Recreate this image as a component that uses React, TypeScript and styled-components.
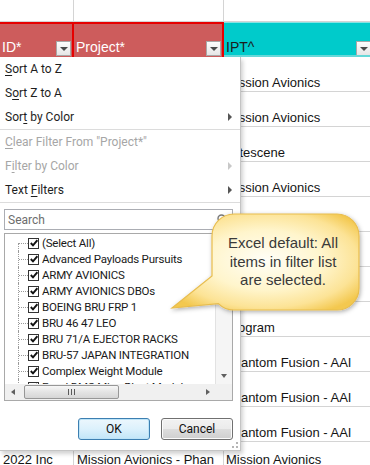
import React from "react"
import styled, { createGlobalStyle, css } from "styled-components"

const GlobalStyle = createGlobalStyle`
  html, body {
    margin: 0;
    padding: 0;
    background: #ffffff;
  }
  body {
    overflow: hidden;
  }
`

// IPT column values; the rows under the callout are left blank
const iptValues = [
  "Mission Avionics",
  "Mission Avionics",
  "Elitescene",
  "Mission Avionics",
  "",
  "",
  "",
  "Program",
  "Phantom Fusion - AAI",
  "Phantom Fusion - AAI",
  "Phantom Fusion - AAI",
]

const projects = [
  "(Select All)",
  "Advanced Payloads Pursuits",
  "ARMY AVIONICS",
  "ARMY AVIONICS DBOs",
  "BOEING BRU FRP 1",
  "BRU 46 47 LEO",
  "BRU 71/A EJECTOR RACKS",
  "BRU-57 JAPAN INTEGRATION",
  "Complex Weight Module",
  "Excel DMS Mine Blast Module",
]

const App: React.FC = () => {
  return (
    <>
      <GlobalStyle />
      <Sheet>
        <Row $h={22}>
          <Cell />
          <Cell />
          <Cell />
        </Row>
        <Row $h={35}>
          <HeaderCell $tone="red">
            <HeaderLabel>ID*</HeaderLabel>
            <FilterButton />
          </HeaderCell>
          <HeaderCell $tone="red">
            <HeaderLabel>Project*</HeaderLabel>
            <FilterButton />
          </HeaderCell>
          <HeaderCell $tone="cyan">
            <HeaderLabel>IPT^</HeaderLabel>
            <FilterButton />
          </HeaderCell>
        </Row>
        {iptValues.map((value, i) => (
          <Row key={i} $h={35}>
            <Cell />
            <Cell />
            <Cell $indent={1}>{value}</Cell>
          </Row>
        ))}
        <Row $h={27}>
          <Cell>2022 Inc</Cell>
          <Cell>Mission Avionics - Phan</Cell>
          <Cell $indent={2}>Mission Avionics</Cell>
        </Row>

        <Menu>
          <MenuItem>
            <span><Key>S</Key>ort A to Z</span>
          </MenuItem>
          <MenuItem>
            <span>S<Key>o</Key>rt Z to A</span>
          </MenuItem>
          <MenuItem>
            <span>Sor<Key>t</Key> by Color</span>
            <SubArrow />
          </MenuItem>
          <Separator />
          <MenuItem $disabled>
            <span><Key>C</Key>lear Filter From "Project*"</span>
          </MenuItem>
          <MenuItem $disabled>
            <span>F<Key>i</Key>lter by Color</span>
            <SubArrow $disabled />
          </MenuItem>
          <MenuItem>
            <span>Text <Key>F</Key>ilters</span>
            <SubArrow />
          </MenuItem>
          <Separator />

          <SearchBox>
            <Placeholder>Search</Placeholder>
            <svg width="11" height="11" viewBox="0 0 11 11">
              <circle cx="4.5" cy="4.5" r="3.5" fill="none" stroke="#7a7a7a" strokeWidth="1.4" />
              <line x1="7.2" y1="7.2" x2="10.2" y2="10.2" stroke="#7a7a7a" strokeWidth="1.6" />
            </svg>
          </SearchBox>

          <ListBox>
            <ListItems>
              {projects.map((name, i) => (
                <TreeItem key={name}>
                  <Connector $first={i === 0} />
                  <CheckBox>
                    <svg width="8" height="8" viewBox="0 0 8 8">
                      <polyline points="0.8,4 3,6.4 7.4,1.2" fill="none" stroke="#111" strokeWidth="1.9" />
                    </svg>
                  </CheckBox>
                  <ItemLabel>{name}</ItemLabel>
                </TreeItem>
              ))}
            </ListItems>
            <VScroll>
              <ArrowBox><Arrow $dir="up" /></ArrowBox>
              <ArrowBox><Arrow $dir="down" /></ArrowBox>
            </VScroll>
            <HScroll>
              <ArrowBox><Arrow $dir="left" /></ArrowBox>
              <Thumb>
                <ThumbGrip />
              </Thumb>
              <TrackRest />
              <ArrowBox><Arrow $dir="right" /></ArrowBox>
            </HScroll>
            <ScrollCorner />
          </ListBox>

          <ButtonRow>
            <DialogButton $primary>OK</DialogButton>
            <DialogButton>Cancel</DialogButton>
          </ButtonRow>
          <GripRow>
            <svg width="6" height="6" viewBox="0 0 6 6">
              <rect x="4" y="0" width="2" height="2" fill="#b5b5b5" />
              <rect x="0" y="4" width="2" height="2" fill="#b5b5b5" />
              <rect x="4" y="4" width="2" height="2" fill="#b5b5b5" />
            </svg>
          </GripRow>
        </Menu>

        <Callout>
          <svg width="210" height="125" viewBox="0 0 210 125">
            <defs>
              <radialGradient id="calloutFill" cx="50%" cy="48%" r="62%">
                <stop offset="0" stopColor="#fffef7" />
                <stop offset="0.5" stopColor="#fff5cc" />
                <stop offset="0.8" stopColor="#fce396" />
                <stop offset="1" stopColor="#f3c84f" />
              </radialGradient>
              <filter id="calloutShadow" x="-10%" y="-10%" width="125%" height="130%">
                <feDropShadow dx="1" dy="1.5" stdDeviation="2.2" floodColor="#000" floodOpacity="0.32" />
              </filter>
            </defs>
            <path
              d="M74 14 H177 A22 22 0 0 1 199 36 V88 A22 22 0 0 1 177 110 H74 A22 22 0 0 1 58.4 103.6 L12 108 L52 76 V36 A22 22 0 0 1 74 14 Z"
              fill="url(#calloutFill)"
              stroke="#e8bd4e"
              strokeWidth="1.2"
              filter="url(#calloutShadow)"
            />
          </svg>
          <CalloutText>
            Excel default: All
            <br />
            items in filter list
            <br />
            are selected.
          </CalloutText>
        </Callout>
      </Sheet>
    </>
  )
}

const Sheet = styled.div`
  position: relative;
  width: 370px;
  height: 465px;
  overflow: hidden;
  font-family: "Liberation Sans", Arial, sans-serif;
`

const Row = styled.div<{ $h: number }>`
  display: grid;
  grid-template-columns: 74px 150px 148px;
  width: 372px;
  height: ${(p) => p.$h}px;
`

const Cell = styled.div<{ $indent?: number }>`
  box-sizing: border-box;
  border-right: 1px solid #d4d4d4;
  border-bottom: 1px solid #d4d4d4;
  display: flex;
  align-items: flex-end;
  padding: 0 0 1px ${(p) => p.$indent ?? 3}px;
  font-size: 13px;
  line-height: 15px;
  color: #151515;
  white-space: nowrap;
  overflow: hidden;
`

const HeaderCell = styled.div<{ $tone: "red" | "cyan" }>`
  box-sizing: border-box;
  display: flex;
  align-items: flex-end;
  padding: 0 1px 2px 2px;
  font-size: 14px;
  line-height: 16px;
  white-space: nowrap;
  overflow: hidden;
  ${(p) =>
    p.$tone === "red"
      ? css`
          background: #cd5c5c;
          color: #ffffff;
          border-top: 2px solid #e60000;
          border-right: 2px solid #e60000;
        `
      : css`
          background: #00cbcb;
          color: #1c1c1c;
          border-top: 1px solid #86e4e4;
          border-bottom: 2px solid #66d8d8;
          padding-bottom: 0;
        `}
`

const HeaderLabel = styled.span`
  flex: 1;
  overflow: hidden;
`

const FilterButton = styled.span`
  box-sizing: border-box;
  flex-shrink: 0;
  width: 15px;
  height: 15px;
  margin-bottom: -1px;
  border: 1px solid #a8a8a8;
  background: linear-gradient(#fdfdfd, #e6e6e6);
  display: flex;
  align-items: center;
  justify-content: center;

  &::after {
    content: "";
    border-left: 4px solid transparent;
    border-right: 4px solid transparent;
    border-top: 4px solid #4a4a4a;
    margin-top: 1px;
  }
`

const Menu = styled.div`
  position: absolute;
  top: 57px;
  left: 0;
  width: 241px;
  height: 394px;
  box-sizing: border-box;
  background: #ffffff;
  border-right: 1px solid #c4c4c4;
  border-bottom: 1px solid #c4c4c4;
  box-shadow: 2px 3px 4px rgba(0, 0, 0, 0.18);
  font-family: Roboto, "Noto Sans", sans-serif;
  display: flex;
  flex-direction: column;
`

const MenuItem = styled.div<{ $disabled?: boolean }>`
  height: 24px;
  flex-shrink: 0;
  display: flex;
  align-items: center;
  justify-content: space-between;
  padding: 0 8px 0 5px;
  font-size: 12px;
  color: ${(p) => (p.$disabled ? "#a6a6a6" : "#1e1e1e")};
`

const Key = styled.span`
  text-decoration: underline;
  text-underline-offset: 2px;
`

const SubArrow = styled.span<{ $disabled?: boolean }>`
  width: 0;
  height: 0;
  border-top: 4px solid transparent;
  border-bottom: 4px solid transparent;
  border-left: 4px solid ${(p) => (p.$disabled ? "#c8c8c8" : "#555555")};
`

const Separator = styled.div`
  height: 1px;
  flex-shrink: 0;
  background: #dcdcdc;
`

const SearchBox = styled.div`
  box-sizing: border-box;
  height: 21px;
  margin: 6px 7px 0 4px;
  border: 1px solid #abadb3;
  display: flex;
  align-items: center;
  justify-content: space-between;
  padding: 0 4px 0 3px;
`

const Placeholder = styled.span`
  font-size: 12px;
  color: #6d6d6d;
`

const ListBox = styled.div`
  box-sizing: border-box;
  height: 168px;
  margin: 3px 7px 0 4px;
  border: 1px solid #a9a9a9;
  display: grid;
  grid-template-columns: 1fr 16px;
  grid-template-rows: 1fr 16px;
`

const ListItems = styled.div`
  overflow: hidden;
  padding-top: 1px;
  padding-left: 13px;
  border-right: 1px solid #e2e2e2;
`

const TreeItem = styled.div`
  height: 16px;
  display: flex;
  align-items: center;
  white-space: nowrap;
`

const Connector = styled.span<{ $first?: boolean }>`
  position: relative;
  align-self: stretch;
  width: 10px;
  flex-shrink: 0;

  &::before {
    content: "";
    position: absolute;
    left: 0;
    top: ${(p) => (p.$first ? "8px" : "0")};
    bottom: 0;
    border-left: 1px dotted #9a9a9a;
  }

  &::after {
    content: "";
    position: absolute;
    left: 1px;
    right: 0;
    top: 8px;
    border-top: 1px dotted #9a9a9a;
  }
`

const CheckBox = styled.span`
  box-sizing: border-box;
  width: 11px;
  height: 11px;
  flex-shrink: 0;
  border: 1px solid #333333;
  background: #ffffff;
  display: flex;
  align-items: center;
  justify-content: center;
`

const ItemLabel = styled.span`
  margin-left: 3px;
  font-size: 11.5px;
  letter-spacing: -0.2px;
  color: #1a1a1a;
`

const VScroll = styled.div`
  background: #f5f5f5;
  display: flex;
  flex-direction: column;
  justify-content: space-between;
`

const HScroll = styled.div`
  background: #f0f0f0;
  display: flex;
  align-items: center;
`

const ScrollCorner = styled.div`
  background: #f0f0f0;
`

const ArrowBox = styled.span`
  width: 16px;
  height: 16px;
  flex-shrink: 0;
  display: flex;
  align-items: center;
  justify-content: center;
`

const Arrow = styled.span<{ $dir: "up" | "down" | "left" | "right" }>`
  width: 0;
  height: 0;
  ${(p) =>
    p.$dir === "up" || p.$dir === "down"
      ? css`
          border-left: 3.5px solid transparent;
          border-right: 3.5px solid transparent;
          ${p.$dir === "down" ? "border-top" : "border-bottom"}: 4px solid #606060;
        `
      : css`
          border-top: 3.5px solid transparent;
          border-bottom: 3.5px solid transparent;
          ${p.$dir === "right" ? "border-left" : "border-right"}: 4px solid #606060;
        `}
`

const Thumb = styled.span`
  box-sizing: border-box;
  width: 95px;
  height: 14px;
  margin-left: 3px;
  border: 1px solid #979797;
  border-radius: 2px;
  background: linear-gradient(#f7f7f7, #e4e4e4 50%, #d6d6d6);
  display: flex;
  align-items: center;
  justify-content: center;
`

const ThumbGrip = styled.span`
  width: 7px;
  height: 6px;
  background: repeating-linear-gradient(to right, #5a5a5a 0 1px, transparent 1px 3px);
`

const TrackRest = styled.span`
  flex: 1;
`

const ButtonRow = styled.div`
  display: flex;
  justify-content: flex-end;
  gap: 11px;
  margin-top: 17px;
  padding-right: 7px;
`

const DialogButton = styled.button<{ $primary?: boolean }>`
  box-sizing: border-box;
  width: 72px;
  height: 22px;
  padding: 0;
  border-radius: 3px;
  font-family: Roboto, "Noto Sans", sans-serif;
  font-size: 12px;
  color: #111111;
  ${(p) =>
    p.$primary
      ? css`
          border: 1px solid #3c7fb1;
          background: linear-gradient(#ecf7fd, #dcf1fc 50%, #c2e6f8);
          box-shadow: inset 0 0 0 1px #bde4f8;
        `
      : css`
          border: 1px solid #707070;
          background: linear-gradient(#f2f2f2, #ebebeb 50%, #dddddd 51%, #cfcfcf);
          box-shadow: inset 0 0 0 1px #fbfbfb;
        `}
`

const GripRow = styled.div`
  margin-top: auto;
  display: flex;
  justify-content: flex-end;
  padding: 0 2px 2px 0;
`

const Callout = styled.div`
  position: absolute;
  left: 160px;
  top: 200px;
  width: 210px;
  height: 125px;
`

const CalloutText = styled.div`
  position: absolute;
  left: 52px;
  top: 14px;
  width: 147px;
  height: 96px;
  box-sizing: border-box;
  padding-right: 5px;
  display: flex;
  align-items: center;
  justify-content: center;
  text-align: center;
  font-family: "Liberation Sans", Arial, sans-serif;
  font-size: 15px;
  line-height: 18.5px;
  color: #3a3a3a;
`

export default App
